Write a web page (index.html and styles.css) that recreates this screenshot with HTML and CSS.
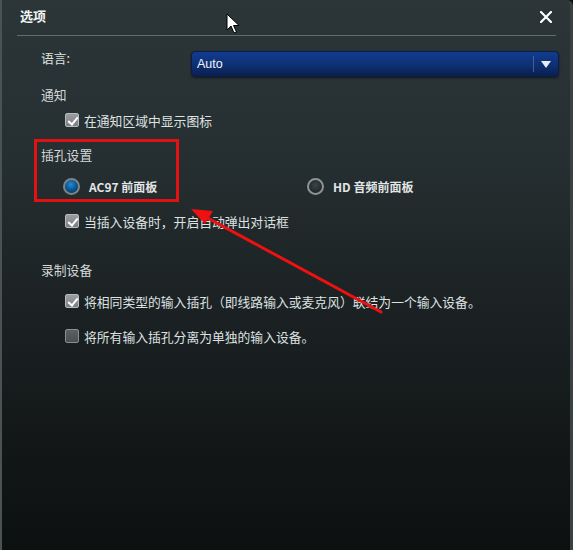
FILE: index.html
```html
<!DOCTYPE html>
<html lang="zh-CN">
<head>
<meta charset="utf-8">
<title>选项</title>
<link rel="stylesheet" href="styles.css">
</head>
<body>
<div class="dialog">
  <div class="titlebar">
    <span class="title">选项</span>
    <svg class="close" width="12" height="12" viewBox="0 0 12 12"><path d="M1 1 L11 11 M11 1 L1 11" stroke="#fff" stroke-width="2.2" stroke-linecap="square"/></svg>
  </div>
  <div class="sep"></div>
  <div class="content">
    <div class="row lang">
      <span class="label">语言:</span>
      <div class="select">
        <span class="value">Auto</span>
        <span class="divider"></span>
        <svg class="caret" width="10" height="7" viewBox="0 0 10 7"><path d="M0 0 H10 L5 7 Z" fill="#e8ecf4"/></svg>
      </div>
    </div>
    <div class="row heading m8">通知</div>
    <div class="row opt m8"><span class="cb checked"></span><span>在通知区域中显示图标</span></div>
    <div class="row heading m16">插孔设置</div>
    <div class="row radios m13">
      <div class="radio-item first"><span class="radio on"></span><span class="rtext">AC97 前面板</span></div>
      <div class="radio-item"><span class="radio"></span><span class="rtext">HD 音频前面板</span></div>
    </div>
    <div class="row opt m16"><span class="cb checked"></span><span>当插入设备时，开启自动弹出对话框</span></div>
    <div class="row heading m30">录制设备</div>
    <div class="row opt m14"><span class="cb checked"></span><span>将相同类型的输入插孔（即线路输入或麦克风）联结为一个输入设备。</span></div>
    <div class="row opt m17"><span class="cb"></span><span>将所有输入插孔分离为单独的输入设备。</span></div>
  </div>
  <div class="redbox"></div>
  <svg class="arrow" width="573" height="550" viewBox="0 0 573 550">
    <line x1="381" y1="312" x2="204" y2="216" stroke="#ee1111" stroke-width="3" stroke-linecap="round"/>
    <polygon points="191,209 213,211 205,224" fill="#ee1111"/>
  </svg>
  <svg class="cursor" width="14" height="22" viewBox="0 0 14 22"><path d="M1 1 L1 17 L5 13 L8 20 L10.5 19 L7.5 12.5 L13 12.5 Z" fill="#fff" stroke="#000" stroke-width="1"/></svg>
</div>
</body>
</html>
```

FILE: styles.css
```css
html, body {
  margin: 0;
  padding: 0;
  background: #0c0f10;
}
body {
  font-family: "Noto Sans CJK SC", "Liberation Sans", sans-serif;
  color: #dde1e1;
  font-size: 12.8px;
}
.dialog {
  position: relative;
  width: 573px;
  height: 550px;
  box-sizing: border-box;
  border-left: 2px solid #4b5254;
  border-right: 3px solid #3a4143;
  border-top-right-radius: 6px;
  background: linear-gradient(to bottom, #2c3537 0%, #252e30 30%, #1c2224 55%, #131718 80%, #0d1011 100%);
  overflow: hidden;
}
.titlebar {
  height: 35px;
  display: flex;
  align-items: center;
  justify-content: space-between;
  padding: 0 18px 0 18px;
  box-sizing: border-box;
}
.title {
  font-size: 13px;
  font-weight: bold;
  color: #f2f4f4;
  margin-top: -5px;
}
.close {
  margin-top: -2px;
}
.sep {
  height: 1px;
  background: #626b6d;
  margin: 0 14px 0 15px;
}
.content {
  padding-left: 39px;
  padding-right: 11px;
}
.row {
  display: flex;
  align-items: center;
  height: 18px;
}
.lang {
  height: 26px;
  margin-top: 15px;
}
.label {
  width: 150px;
  align-self: flex-start;
  line-height: 14px;
}
.select {
  flex: 1;
  height: 26px;
  box-sizing: border-box;
  border-radius: 4px;
  background: linear-gradient(to bottom, #123c90 0%, #0e3176 50%, #0a1f4e 100%);
  border: 1px solid #0a1d48;
  box-shadow: 0 1px 2px rgba(0,0,0,0.5);
  display: flex;
  align-items: center;
  padding-left: 5px;
  padding-right: 7px;
  color: #f0f3f8;
  font-family: "Liberation Sans", sans-serif;
  font-size: 12.5px;
}
.value { flex: 1; }
.divider {
  width: 1px;
  height: 16px;
  background: #4a5f90;
  margin-right: 7px;
}
.heading { color: #d4d8d8; }
.m8 { margin-top: 8px; }
.m13 { margin-top: 13px; }
.m14 { margin-top: 14px; }
.m16 { margin-top: 16px; }
.m17 { margin-top: 17px; }
.m30 { margin-top: 30px; }
.opt {
  padding-left: 24px;
  gap: 5px;
}
.cb {
  width: 14px;
  height: 14px;
  box-sizing: border-box;
  border: 1px solid #b7bbbb;
  border-radius: 2px;
  background: linear-gradient(to bottom, #9a9e9e, #7c8080);
  position: relative;
  flex: none;
}
.cb.checked::after {
  content: "";
  position: absolute;
  left: 3.5px;
  top: 0.5px;
  width: 4px;
  height: 8px;
  border: solid #ffffff;
  border-width: 0 2px 2px 0;
  transform: rotate(40deg);
}
.cb:not(.checked) {
  background: linear-gradient(to bottom, #5c6060, #4a4e4e);
  border-color: #8a8e8e;
}
.radios {
  height: 20px;
  padding-left: 22px;
}
.radio-item {
  display: flex;
  align-items: center;
  gap: 9px;
}
.radio-item.first { width: 244px; }
.radio {
  width: 17px;
  height: 17px;
  box-sizing: border-box;
  border-radius: 50%;
  border: 2px solid #8c9496;
  background: radial-gradient(circle at 50% 40%, #3c4446 0%, #1e2426 80%);
  flex: none;
}
.radio.on {
  border-color: #7c8486;
  background: radial-gradient(circle at 45% 35%, #2a8ad0 0%, #0c5a98 45%, #04284a 100%);
}
.rtext {
  font-weight: bold;
  font-size: 12px;
  color: #e2e6e6;
}
.redbox {
  position: absolute;
  left: 32px;
  top: 139px;
  width: 145px;
  height: 63px;
  box-sizing: border-box;
  border: 3px solid #e21212;
}
.arrow {
  position: absolute;
  left: -2px;
  top: 0;
}
.cursor {
  position: absolute;
  left: 224px;
  top: 13px;
}
```
